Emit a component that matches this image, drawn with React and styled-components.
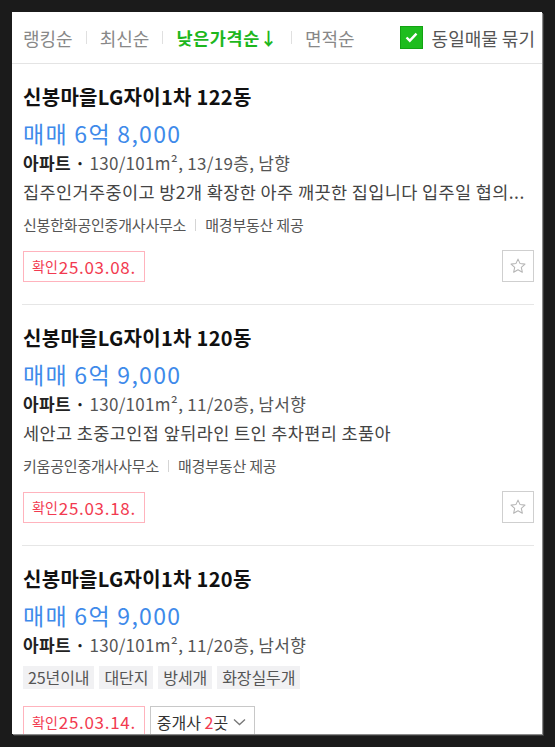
import styled, { createGlobalStyle } from 'styled-components';

const GlobalStyle = createGlobalStyle`
  body {
    margin: 0;
    background: #1b1b1b;
    font-family: "Noto Sans CJK KR", "Noto Sans", sans-serif;
  }
`

const Page = styled.div`
  padding: 12px;
`

const Panel = styled.div`
  width: 530px;
  height: 722px;
  overflow: hidden;
  background: #fff;
  box-shadow: 1px 1px 0 #8a8a8a, 2px 2px 0 #3a3a3a;
`

const SortBar = styled.div`
  display: flex;
  align-items: center;
  height: 51px;
  padding: 0 7px 0 11px;
  border-bottom: 1px solid #e4e4e4;
  font-size: 18px;
`

const SortItem = styled.span`
  color: ${props => props.active ? '#1db71d' : '#888'};
  font-weight: ${props => props.active ? 700 : 400};
  font-size: ${props => props.active ? '17.5px' : 'inherit'};
  letter-spacing: ${props => props.active ? '0.6px' : '0'};
`

const SortDivider = styled.span`
  width: 1px;
  height: 13px;
  margin: 0 13px;
  background: #e0e0e0;
`

const GroupToggle = styled.label`
  display: flex;
  align-items: center;
  gap: 9px;
  margin-left: auto;
  color: #555;
`

const CheckBox = styled.span`
  width: 23px;
  height: 23px;
  box-sizing: border-box;
  border: 1px solid #13a313;
  background: #1ebd1e;
  display: flex;
  align-items: center;
  justify-content: center;
`

const Card = styled.div`
  margin: 0 8px 0 10px;
  padding: 22px 0 22px 1px;
  border-bottom: 1px solid #e6e6e6;
`

const Title = styled.div`
  font-size: 20px;
  font-weight: 700;
  line-height: 22px;
  color: #111;
  letter-spacing: 0.3px;
`

const Price = styled.div`
  margin-top: 12px;
  font-size: 23px;
  line-height: 26px;
  color: #3e8aea;
  letter-spacing: 1.3px;
`

const Spec = styled.div`
  margin-top: 6px;
  font-size: 17px;
  line-height: 22px;
  color: #555;
  letter-spacing: 0.3px;

  b {
    color: #222;
    font-weight: 700;
  }
`

const Desc = styled.div`
  margin-top: 6px;
  font-size: 17.5px;
  line-height: 24px;
  color: #444;
  letter-spacing: 0.4px;
  white-space: nowrap;
  overflow: hidden;
  text-overflow: ellipsis;
`

const Agents = styled.div`
  display: flex;
  align-items: center;
  margin-top: ${props => props.top}px;
  font-size: 15px;
  line-height: 20px;
  color: #555;
  letter-spacing: -0.2px;
`

const AgentDivider = styled.span`
  width: 1px;
  height: 12px;
  margin: 0 9px;
  background: #d5d5d5;
`

const Tags = styled.div`
  display: flex;
  gap: 5px;
  margin-top: 10px;
`

const Tag = styled.span`
  padding: 0 5px;
  height: 23px;
  line-height: 23px;
  background: #f1f1f3;
  color: #555;
  font-size: 16px;
  letter-spacing: -0.1px;
`

const Footer = styled.div`
  display: flex;
  align-items: center;
  gap: 5px;
  margin-top: ${props => props.top}px;
`

const ConfirmBadge = styled.span`
  display: flex;
  align-items: center;
  height: 31px;
  box-sizing: border-box;
  padding: 0 8px;
  border: 1px solid #ffb3bd;
  color: #f23a50;
  font-size: 17px;
  letter-spacing: 0.7px;

  small {
    font-size: 14px;
    letter-spacing: 0;
    margin-right: 1px;
  }
`

const BrokerButton = styled.span`
  display: flex;
  align-items: center;
  gap: 5px;
  height: 31px;
  box-sizing: border-box;
  padding: 0 8px 0 6px;
  border: 1px solid #c8c8c8;
  color: #333;
  font-size: 16px;

  em {
    font-style: normal;
    color: #f23a50;
  }
`

const StarButton = styled.span`
  margin-left: auto;
  width: 32px;
  height: 32px;
  box-sizing: border-box;
  border: 1px solid #cfcfcf;
  display: flex;
  align-items: center;
  justify-content: center;
`

const listings = [
  {
    title: '신봉마을LG자이1차 122동',
    price: '매매 6억 8,000',
    spec: '130/101m², 13/19층, 남향',
    desc: '집주인거주중이고 방2개 확장한 아주 깨끗한 집입니다 입주일 협의...',
    agent: '신봉한화공인중개사사무소',
    date: '25.03.08.',
  },
  {
    title: '신봉마을LG자이1차 120동',
    price: '매매 6억 9,000',
    spec: '130/101m², 11/20층, 남서향',
    desc: '세안고 초중고인접 앞뒤라인 트인 추차편리 초품아',
    agent: '키움공인중개사사무소',
    date: '25.03.18.',
  },
  {
    title: '신봉마을LG자이1차 120동',
    price: '매매 6억 9,000',
    spec: '130/101m², 11/20층, 남서향',
    tags: ['25년이내', '대단지', '방세개', '화장실두개'],
    date: '25.03.14.',
    brokers: 2,
  },
];

const Star = () => (
  <svg width="18" height="18" viewBox="0 0 24 24" fill="none" stroke="#b5b5b5" strokeWidth="1.4" strokeLinejoin="round">
    <path d="M12 2.8l2.8 6 6.5.7-4.9 4.4 1.4 6.4L12 17l-5.8 3.3 1.4-6.4-4.9-4.4 6.5-.7z" />
  </svg>
);

function Listing({ item }) {
  return (
    <Card>
      <Title>{item.title}</Title>
      <Price>{item.price}</Price>
      <Spec><b>아파트 ·</b> {item.spec}</Spec>
      {item.desc && <Desc>{item.desc}</Desc>}
      {item.agent && (
        <Agents top={item.desc ? 11 : 17}>
          {item.agent}
          <AgentDivider />
          매경부동산 제공
        </Agents>
      )}
      {item.tags && (
        <Tags>
          {item.tags.map(t => <Tag key={t}>{t}</Tag>)}
        </Tags>
      )}
      <Footer top={item.tags ? 17 : 15}>
        <ConfirmBadge><small>확인</small>{item.date}</ConfirmBadge>
        {item.brokers && (
          <BrokerButton>
            <span>중개사 <em>{item.brokers}</em>곳</span>
            <svg width="13" height="8" viewBox="0 0 13 8" fill="none" stroke="#777" strokeWidth="1.3">
              <path d="M1 1.5l5.5 5 5.5-5" />
            </svg>
          </BrokerButton>
        )}
        {!item.brokers && <StarButton><Star /></StarButton>}
      </Footer>
    </Card>
  );
}

function App() {
  return (
    <Page>
      <GlobalStyle />
      <Panel>
        <SortBar>
          <SortItem>랭킹순</SortItem>
          <SortDivider />
          <SortItem>최신순</SortItem>
          <SortDivider />
          <SortItem active>낮은가격순↓</SortItem>
          <SortDivider />
          <SortItem>면적순</SortItem>
          <GroupToggle>
            <CheckBox>
              <svg width="13" height="11" viewBox="0 0 13 11" fill="none" stroke="#fff" strokeWidth="2.4">
                <path d="M1.5 5.5l3.3 3.2 6.7-7" />
              </svg>
            </CheckBox>
            동일매물 묶기
          </GroupToggle>
        </SortBar>
        {listings.map((item, i) => <Listing key={i} item={item} />)}
      </Panel>
    </Page>
  );
}

export default App;
